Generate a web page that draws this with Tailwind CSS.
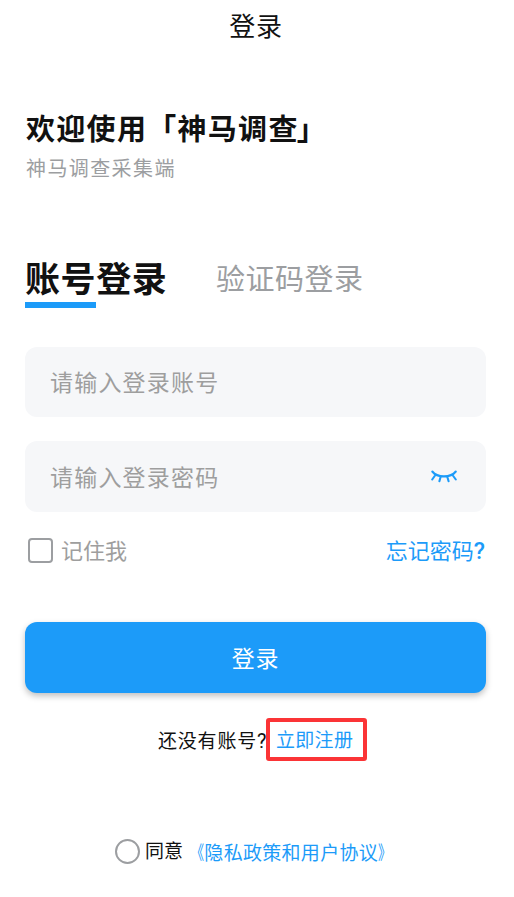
<!DOCTYPE html>
<html lang="zh-CN">
<head>
<meta charset="utf-8">
<title>登录</title>
<script src="https://cdn.jsdelivr.net/npm/@tailwindcss/browser@4"></script>
</head>
<body class="bg-white font-['Noto_Sans_CJK_SC',sans-serif] text-[#111]">
<main class="flex h-[897px] w-[514px] flex-col overflow-hidden pl-[25px] pr-7">
  <header class="flex h-[50px] items-center justify-center pl-px text-[26px] leading-[50px] tracking-[0.8px]">登录</header>
  <h1 class="mt-[57px] h-10 whitespace-nowrap pl-px text-[29px] leading-10 font-bold tracking-[1.3px]">欢迎使用「神马调查<span class="-ml-0.5">」</span></h1>
  <p class="mt-[5px] h-8 pl-px text-[20px] leading-8 tracking-[1.4px] text-[#9c9ea1]">神马调查采集端</p>
  <nav class="mt-[68px] flex h-[56px] items-start whitespace-nowrap">
    <div class="w-[191px]">
      <div class="h-[50px] text-[35px] leading-[50px] font-bold tracking-[0.6px]">账号登录</div>
      <div class="h-[6px] w-[71px] bg-[#1c9bf9]"></div>
    </div>
    <div class="text-[29px] leading-[50px] tracking-[0.5px] text-[#9c9ea1]">验证码登录</div>
  </nav>
  <div class="mt-[39px] flex h-[70px] items-center rounded-xl bg-[#f6f7f9] px-[25px] pb-0.5 text-[23px] tracking-[1.2px] text-[#9e9e9e]">请输入登录账号</div>
  <div class="mt-6 flex h-[71px] items-center justify-between rounded-xl bg-[#f6f7f9] px-[25px] pr-7 pb-px text-[23px] tracking-[1.2px] text-[#9e9e9e]">
    <span>请输入登录密码</span>
    <svg class="h-[18px] w-7 text-[#1c9bf9]" viewBox="0 0 28 18" fill="none" stroke="currentColor" stroke-width="2.1" stroke-linecap="round" stroke-linejoin="round"><path d="M2.3 4.5Q6 9.4 14 9.4T25.8 4.5M5.4 8L2.2 12.5M10.7 9.5L9.4 14.3M17.2 9.5l1.4 4.8M22.5 8l3.3 4.5"/></svg>
  </div>
  <div class="mt-[22px] flex h-8 items-center text-[22px] leading-8">
    <span class="ml-[3px] mr-2 size-[25px] rounded-[4px] border-[2.5px] border-[#9c9ea1]"></span>
    <span class="-mt-0.5 text-[#9e9e9e]">记住我</span>
    <a class="mr-px ml-auto flex items-baseline text-[#1c9bf9]">忘记密码<span class="font-[Roboto] text-[23px] font-medium">?</span></a>
  </div>
  <button class="mt-14 h-[71px] rounded-xl bg-[#1c9bf9] text-[23px] tracking-[0.8px] text-white shadow-[0_3px_6px_rgba(0,0,0,0.25)]">登录</button>
  <div class="ml-[132px] mt-[25px] flex h-[43px] items-center whitespace-nowrap text-[19px]">
    <span class="w-[109px] pl-px pt-0.5 tracking-[0.8px]">还没有账号<span class="font-[Roboto] text-[20px]">?</span></span>
    <a class="flex h-[43px] w-[101px] items-center rounded-[3px] border-4 border-[#fb3436] pl-1.5 tracking-[0.3px] text-[#1c9bf9]">立即注册</a>
  </div>
  <div class="ml-[90px] mt-[74px] flex h-8 items-center whitespace-nowrap text-[19px]">
    <span class="mr-[5px] size-[25px] rounded-full border-2 border-[#9c9ea1]"></span>
    <span class="-mt-0.5">同意</span>
    <a class="mt-0.5 ml-0.5 flex tracking-[0.3px] text-[#1c9bf9]"><span class="origin-right scale-x-70">《</span>隐私政策和用户协议<span class="origin-left scale-x-70">》</span></a>
  </div>
</main>
</body>
</html>
